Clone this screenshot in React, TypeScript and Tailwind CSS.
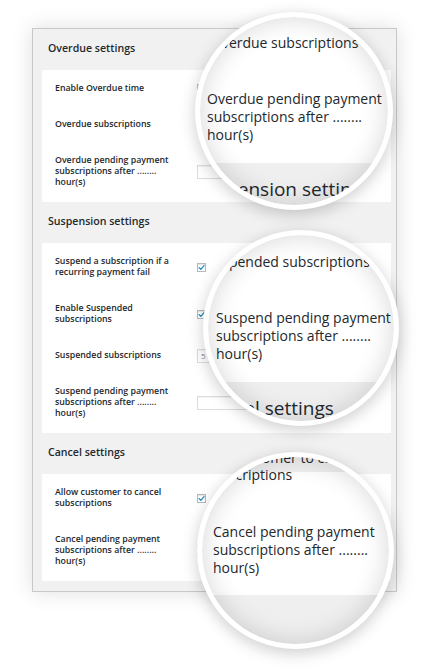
import React from 'react';

const Check: React.FC = () => (
  <span className="flex h-[9px] w-[9px] items-center justify-center border border-[#b4b9be] bg-white shadow-[inset_0_1px_1px_rgba(0,0,0,0.1)]">
    <svg viewBox="0 0 10 10" className="h-[7px] w-[7px]">
      <path d="M1.5 5.2 L4 7.6 L8.6 2.2" fill="none" stroke="#1e8cbe" strokeWidth="1.8" strokeLinecap="round" strokeLinejoin="round" />
    </svg>
  </span>
);

const Field: React.FC<{ value?: string }> = ({ value }) => (
  <span className="flex h-[14px] w-[70px] items-center border border-[#dcdcdc] bg-white pl-[3px] text-[8px] text-[#8a8a8a] shadow-[inset_0_1px_1px_rgba(0,0,0,0.05)]">
    {value}
  </span>
);

const Row: React.FC<{ label: string; control?: React.ReactNode }> = ({ label, control }) => (
  <div className="flex items-center">
    <div className="w-[120px] text-[8.8px] font-semibold leading-[11px] text-[#23282d]">{label}</div>
    <div className="ml-[22px] flex h-[11px] items-center">{control}</div>
  </div>
);

const Section: React.FC<{ title: string; children: React.ReactNode }> = ({ title, children }) => (
  <div>
    <div className="h-[41px] pl-[6px] pt-[12px] text-[10.6px] font-semibold leading-[14px] text-[#23282d]">{title}</div>
    <div className="flex flex-col gap-[25px] bg-white pb-[14px] pl-[13px] pt-[13px]">{children}</div>
  </div>
);

const Lens: React.FC<{ className: string; children: React.ReactNode }> = ({ className, children }) => (
  <div className={`absolute overflow-hidden rounded-full border-[5px] border-white bg-white shadow-[0_4px_16px_rgba(0,0,0,0.2)] ${className}`}>
    <div className="relative flex h-full w-full flex-col text-[14px] leading-[18px] text-[#23282d]">
      {children}
      <div className="pointer-events-none absolute inset-0 rounded-full shadow-[inset_0_0_26px_rgba(0,0,0,0.16)]" />
    </div>
  </div>
);

export default function App() {
  return (
    <div className="relative h-[670px] w-[421px] overflow-hidden bg-white pl-[32px] pt-[28px] font-['Open_Sans',sans-serif]">
      <div className="w-[365px] border border-[#c8c8c8] bg-[#f1f1f1] pb-[10px] pl-[9px] pr-[5px] shadow-[0_0_20px_rgba(0,0,0,0.13)]">
        <Section title="Overdue settings">
          <Row label="Enable Overdue time" control={<Check />} />
          <Row label="Overdue subscriptions" control={<Field />} />
          <Row label="Overdue pending payment subscriptions after ........ hour(s)" control={<Field />} />
        </Section>
        <Section title="Suspension settings">
          <Row label="Suspend a subscription if a recurring payment fail" control={<Check />} />
          <Row label="Enable Suspended subscriptions" control={<Check />} />
          <Row label="Suspended subscriptions" control={<Field value="5" />} />
          <Row label="Suspend pending payment subscriptions after ........ hour(s)" control={<Field />} />
        </Section>
        <Section title="Cancel settings">
          <Row label="Allow customer to cancel subscriptions" control={<Check />} />
          <Row label="Cancel pending payment subscriptions after ........ hour(s)" control={<Field />} />
        </Section>
      </div>

      <Lens className="left-[195px] top-[12px] h-[198px] w-[198px]">
        <div className="ml-[11px] mt-[17px] whitespace-nowrap">Overdue subscriptions</div>
        <div className="ml-[7px] mt-[38px] w-[176px]">Overdue pending payment subscriptions after ........ hour(s)</div>
        <div className="mt-[19px] flex-1 bg-[#efefef] pt-[14px]">
          <div className="ml-[-5px] whitespace-nowrap text-[19px] leading-[24px]">Suspension settings</div>
        </div>
      </Lens>

      <Lens className="left-[203px] top-[230px] h-[196px] w-[196px]">
        <div className="ml-[-2px] mt-[18px] whitespace-nowrap">Suspended subscriptions</div>
        <div className="ml-[8px] mt-[38px] w-[178px]">Suspend pending payment subscriptions after ........ hour(s)</div>
        <div className="mt-[19px] flex-1 bg-[#efefef] pt-[14px]">
          <div className="ml-[-7px] whitespace-nowrap text-[19px] leading-[24px]">Cancel settings</div>
        </div>
      </Lens>

      <Lens className="left-[197px] top-[452px] h-[197px] w-[197px]">
        <div className="bg-[linear-gradient(to_bottom,#efefef_15px,#ffffff_15px)]">
          <div className="mt-[-8px] w-[200px] leading-[17px]">
            <div className="ml-[-6px] whitespace-nowrap">Allow customer to cancel</div>
            <div className="ml-[3px] whitespace-nowrap">subscriptions</div>
          </div>
        </div>
        <div className="ml-[11px] mt-[40px] w-[176px]">Cancel pending payment subscriptions after ........ hour(s)</div>
        <div className="mt-[18px] flex-1 bg-[#efefef]" />
      </Lens>
    </div>
  );
}
